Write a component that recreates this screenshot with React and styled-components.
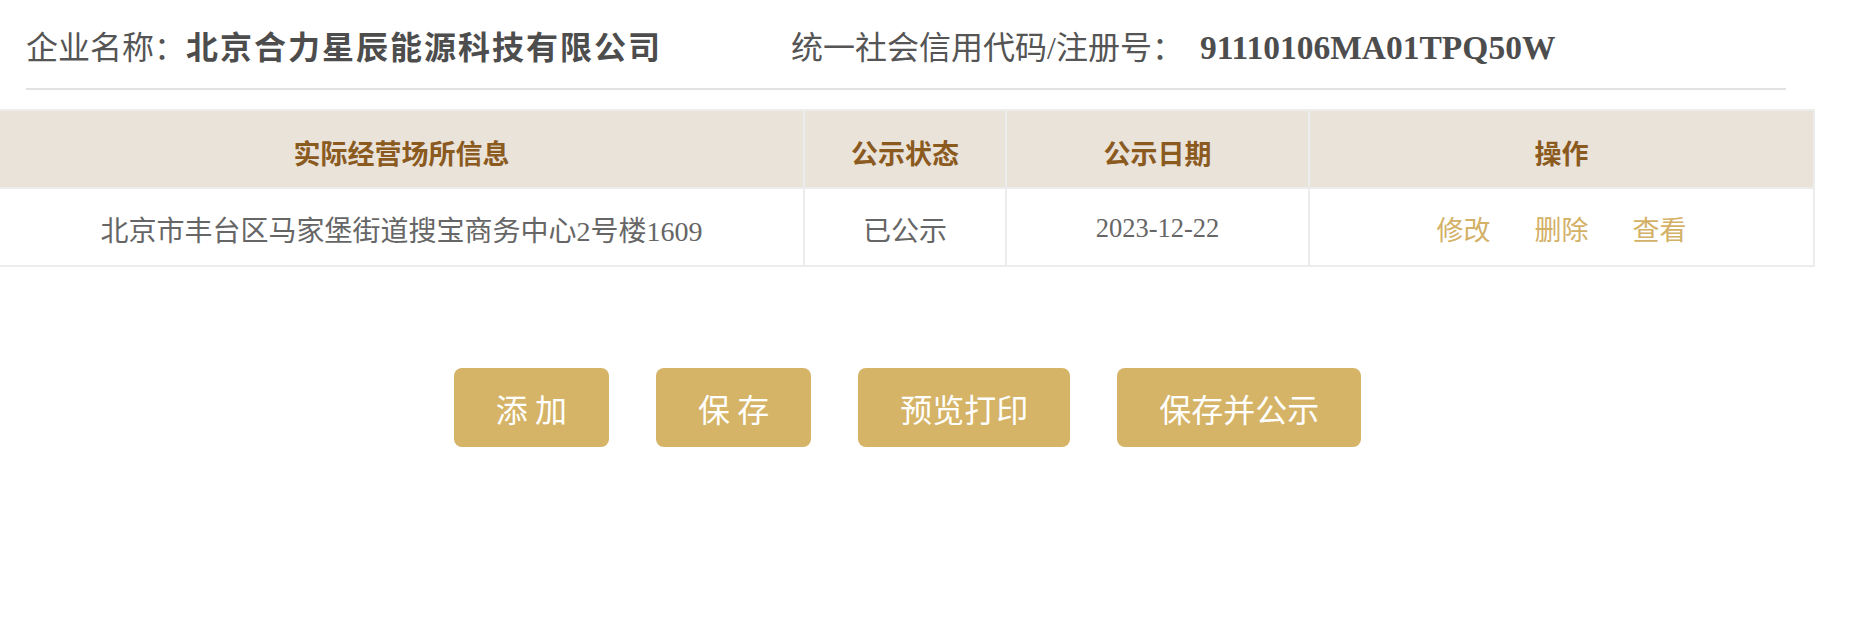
import React from "react";
import styled, { createGlobalStyle } from "styled-components";

const GlobalStyle = createGlobalStyle`
  body {
    margin: 0;
    background: #fff;
    font-family: "Liberation Serif", "Noto Sans CJK SC", serif;
  }
`;

const PageSC = styled.div`
  width: 1852px;
`;

const InfoBar = styled.div`
  display: flex;
  align-items: center;
  width: 1760px;
  margin-left: 26px;
  padding: 28px 0 20px;
  border-bottom: 2px solid #e2e2e2;
  font-size: 32px;
  line-height: 40px;
  color: #555;
`;

const InfoItem = styled.div`
  display: flex;
  align-items: center;
  width: ${(p) => (p.$width ? p.$width + "px" : "auto")};
`;

const Label = styled.span`
  font-weight: normal;
`;

const Value = styled.span`
  font-weight: bold;
  color: #4d4d4d;
  font-size: ${(p) => p.$size || 32}px;
  letter-spacing: ${(p) => p.$spacing || 0}px;
  margin-left: ${(p) => p.$gap || 0}px;
`;

const Grid = styled.div`
  display: grid;
  grid-template-columns: 805px 202px 303px 505px;
  width: 1815px;
  margin-top: 19px;
  border-top: 2px solid #ececec;
`;

const Cell = styled.div`
  display: flex;
  align-items: center;
  justify-content: center;
  box-sizing: border-box;
  height: 78px;
  padding-top: ${(p) => (p.$head ? 6 : 3)}px;
  border-bottom: 2px solid #ececec;
  border-right: 2px solid #ececec;
  background: ${(p) => (p.$head ? "#e9e3da" : "#fff")};
  color: ${(p) => (p.$head ? "#8b5a1f" : "#666")};
  font-weight: ${(p) => (p.$head ? "bold" : "normal")};
  font-size: ${(p) => p.$size || (p.$head ? 27 : 28)}px;
  gap: 44px;
`;

const ActionLink = styled.a`
  color: #d3b166;
  cursor: pointer;
  text-decoration: none;
  font-size: 27px;
`;

const ButtonRow = styled.div`
  display: flex;
  justify-content: center;
  gap: 47px;
  width: 1815px;
  margin-top: 101px;
`;

const Button = styled.button`
  height: 79px;
  padding: 0 42px;
  border: none;
  border-radius: 8px;
  background: #d5b467;
  color: #fff;
  font-family: "Noto Sans CJK SC", sans-serif;
  font-size: 32px;
  cursor: pointer;
  white-space: pre;
`;

const headers = ["实际经营场所信息", "公示状态", "公示日期", "操作"];

const rows = [
  {
    address: "北京市丰台区马家堡街道搜宝商务中心2号楼1609",
    status: "已公示",
    date: "2023-12-22",
  },
];

export default function App() {
  return (
    <PageSC>
      <GlobalStyle />
      <InfoBar>
        <InfoItem $width={765}>
          <Label>企业名称：</Label>
          <Value $spacing={2}>北京合力星辰能源科技有限公司</Value>
        </InfoItem>
        <InfoItem>
          <Label>统一社会信用代码/注册号：</Label>
          <Value $gap={16} $size={33.5}>
            91110106MA01TPQ50W
          </Value>
        </InfoItem>
      </InfoBar>

      <Grid>
        {headers.map((h) => (
          <Cell key={h} $head>
            {h}
          </Cell>
        ))}
        {rows.map((r) => (
          <React.Fragment key={r.address}>
            <Cell>{r.address}</Cell>
            <Cell>{r.status}</Cell>
            <Cell $size={26.5}>{r.date}</Cell>
            <Cell>
              <ActionLink>修改</ActionLink>
              <ActionLink>删除</ActionLink>
              <ActionLink>查看</ActionLink>
            </Cell>
          </React.Fragment>
        ))}
      </Grid>

      <ButtonRow>
        <Button>添 加</Button>
        <Button>保 存</Button>
        <Button>预览打印</Button>
        <Button>保存并公示</Button>
      </ButtonRow>
    </PageSC>
  );
}
